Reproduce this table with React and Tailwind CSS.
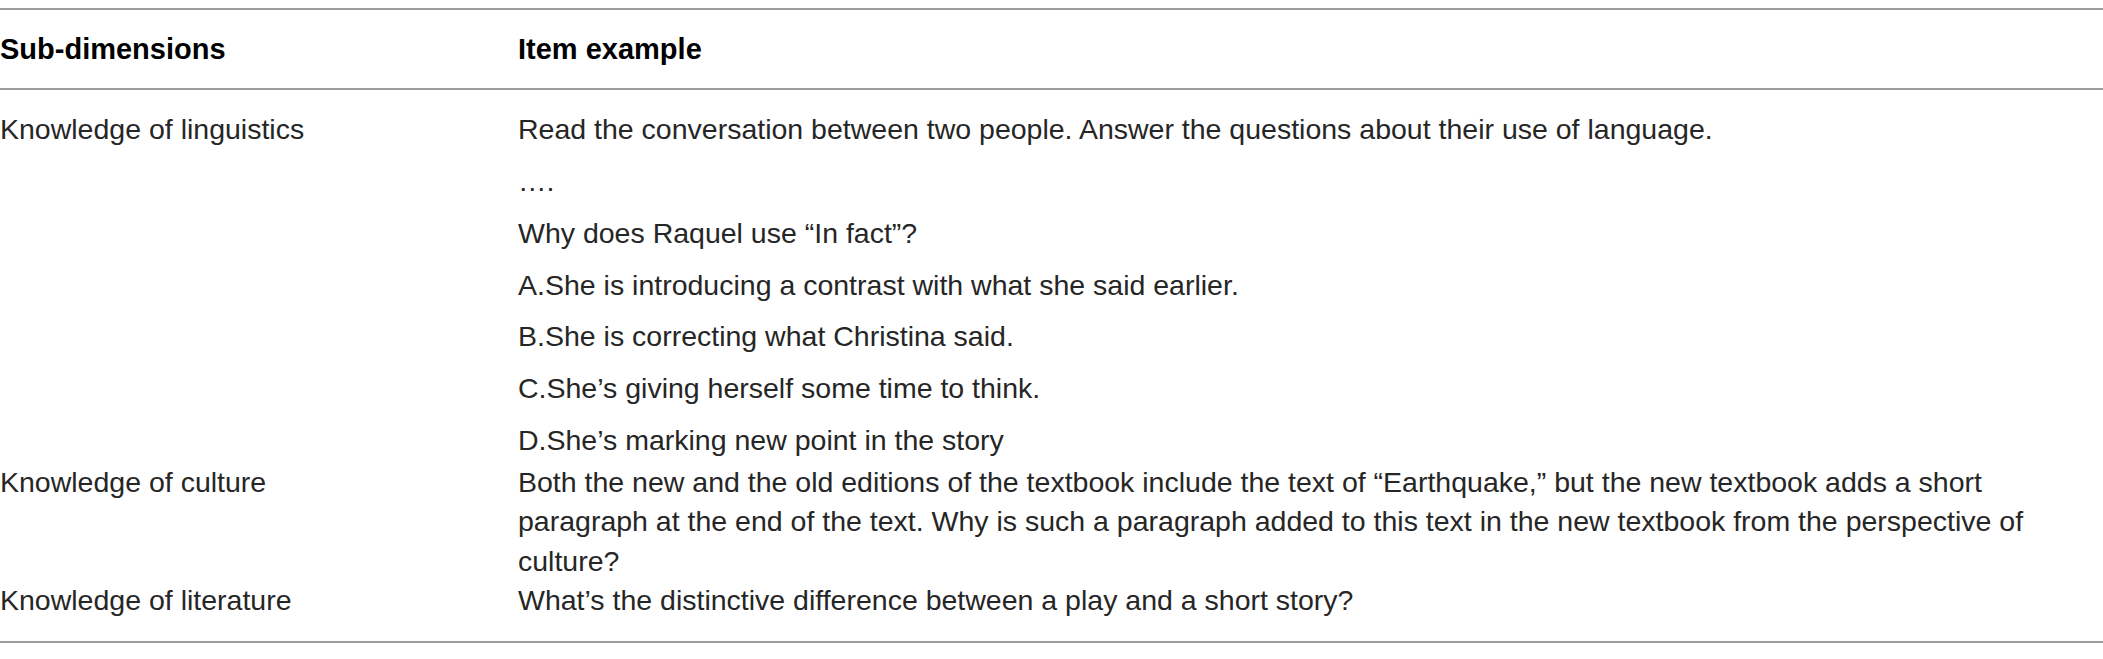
import React from 'react';

// Sub-dimension table: one row per dimension, item example paragraphs in column 2
const rows = [
  {
    label: 'Knowledge of linguistics',
    items: [
      ['Read the conversation between two people. Answer the questions about their use of language.'],
      ['….'],
      ['Why does Raquel use “In fact”?'],
      ['A.She is introducing a contrast with what she said earlier.'],
      ['B.She is correcting what Christina said.'],
      ['C.She’s giving herself some time to think.'],
      ['D.She’s marking new point in the story'],
    ],
    gap: 'pb-[3px]',
  },
  {
    label: 'Knowledge of culture',
    items: [
      [
        'Both the new and the old editions of the textbook include the text of “Earthquake,” but the new textbook adds a short',
        'paragraph at the end of the text. Why is such a paragraph added to this text in the new textbook from the perspective of',
        'culture?',
      ],
    ],
    gap: '',
  },
  {
    label: 'Knowledge of literature',
    items: [['What’s the distinctive difference between a play and a short story?']],
    gap: '',
  },
];

const App = () => {
  return (
    <div className="w-[2103px] min-h-[659px] bg-white pt-[8px] font-['Liberation_Sans',Arial,sans-serif] text-[#262626]">
      {/* header */}
      <div className="grid grid-cols-[518px_1585px] border-y-2 border-[#9c9c9c] pt-[20px] pb-[19px] text-[29px] font-bold leading-[39.4px] text-black">
        <div>Sub-dimensions</div>
        <div>Item example</div>
      </div>

      {/* body */}
      <div className="border-b-2 border-[#9c9c9c] pt-[20px] pb-[20px] text-[28.5px] leading-[39.4px]">
        {rows.map((row) => (
          <div key={row.label} className={`grid grid-cols-[518px_1585px] ${row.gap}`}>
            <div>{row.label}</div>
            <div className="flex flex-col gap-[12.3px]">
              {row.items.map((lines, i) => (
                <p key={i} className="whitespace-nowrap">
                  {lines.map((l, j) => (
                    <React.Fragment key={j}>
                      {j > 0 && <br />}
                      {l}
                    </React.Fragment>
                  ))}
                </p>
              ))}
            </div>
          </div>
        ))}
      </div>
    </div>
  );
};

export default App;
